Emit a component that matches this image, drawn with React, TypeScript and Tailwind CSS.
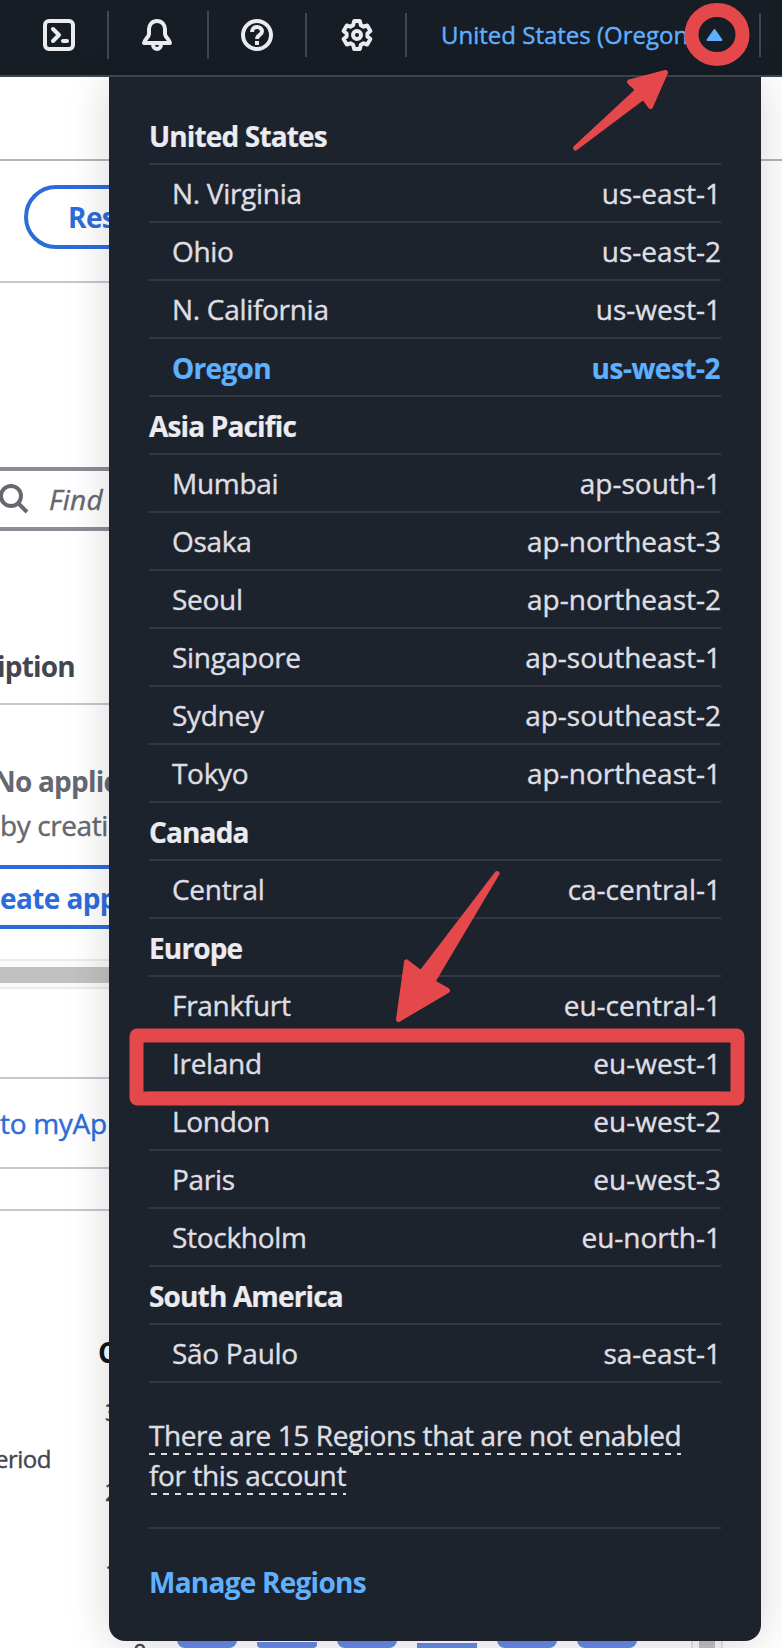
type Region = { name: string; code: string; active?: boolean };
type Group = { title: string; regions: Region[] };

const groups: Group[] = [
  {
    title: "United States",
    regions: [
      { name: "N. Virginia", code: "us-east-1" },
      { name: "Ohio", code: "us-east-2" },
      { name: "N. California", code: "us-west-1" },
      { name: "Oregon", code: "us-west-2", active: true },
    ],
  },
  {
    title: "Asia Pacific",
    regions: [
      { name: "Mumbai", code: "ap-south-1" },
      { name: "Osaka", code: "ap-northeast-3" },
      { name: "Seoul", code: "ap-northeast-2" },
      { name: "Singapore", code: "ap-southeast-1" },
      { name: "Sydney", code: "ap-southeast-2" },
      { name: "Tokyo", code: "ap-northeast-1" },
    ],
  },
  { title: "Canada", regions: [{ name: "Central", code: "ca-central-1" }] },
  {
    title: "Europe",
    regions: [
      { name: "Frankfurt", code: "eu-central-1" },
      { name: "Ireland", code: "eu-west-1" },
      { name: "London", code: "eu-west-2" },
      { name: "Paris", code: "eu-west-3" },
      { name: "Stockholm", code: "eu-north-1" },
    ],
  },
  { title: "South America", regions: [{ name: "São Paulo", code: "sa-east-1" }] },
];

function TopBar() {
  return (
    <header className="flex h-[77px] items-start border-b-2 border-[#424650] bg-[#161d25] text-[#ebebf0]">
      <div className="mt-[11px] flex h-12 w-[109px] items-center border-r-2 border-[#424650] pl-[43px]">
        <svg width="32" height="32" viewBox="0 0 32 32" fill="none" stroke="currentColor" strokeWidth="4" strokeLinejoin="round">
          <rect x="2" y="2" width="28" height="28" rx="4" />
          <path d="M10 10l6 6-6 6" strokeLinecap="round" />
          <path d="M20 22h4" strokeLinecap="round" />
        </svg>
      </div>
      <div className="mt-[11px] flex h-12 w-[100px] items-center border-r-2 border-[#424650] pl-8">
        <svg width="32" height="32" viewBox="0 0 32 32" fill="none" stroke="currentColor" strokeWidth="4" strokeLinejoin="round">
          <path d="M16 2c-5 0-8 4-8 8v5c0 3-5 6-5 9h26c0-3-5-6-5-9v-5c0-4-3-8-8-8z" />
          <path d="M12 25.500a4 4.500 0 0 0 8 0" />
        </svg>
      </div>
      <div className="mt-[13px] flex h-11 w-[98px] items-center border-r-2 border-[#424650] pl-8">
        <svg width="32" height="32" viewBox="0 0 32 32" fill="none" stroke="currentColor" strokeWidth="4">
          <circle cx="16" cy="16" r="14" />
          <path d="M11 13c0-3 2-5 5-5s5 1.800 5 4.500c0 3.500-5 3.500-5 7.500" />
          <path d="M14 24h4" />
        </svg>
      </div>
      <div className="mt-[13px] flex h-11 w-[100px] items-center border-r-2 border-[#424650] pl-[34px]">
        <svg width="32" height="32" viewBox="0 0 32 32" fill="none" stroke="currentColor" strokeWidth="4" strokeLinejoin="round">
          <path d="M13.200 2h5.600l1.100 4.300 2.600 1.400 3.700-1.200 3.200 5.400-3 2.600v3l3 2.600-3.200 5.400-3.700-1.200-2.600 1.400-1.100 4.300h-5.600l-1.100-4.300-2.600-1.400-3.700 1.200-3.200-5.400 3-2.600v-3l-3-2.600 3.200-5.400 3.700 1.200 2.600-1.400z" />
          <circle cx="16" cy="16" r="4" />
        </svg>
      </div>
      <div className="mt-[13px] flex h-11 w-[354px] items-center border-r-2 border-[#424650] pl-[34px] text-[#5fb1ff]">
        <span className="w-[258px] whitespace-nowrap text-[24px] leading-8">United States (Oregon)</span>
        <svg className="ml-[7px]" width="17" height="14" viewBox="0 0 17 14" fill="currentColor" stroke="currentColor" strokeWidth="2" strokeLinejoin="round">
          <path d="M8.500 2 15.500 12h-14z" />
        </svg>
      </div>
    </header>
  );
}

function Backdrop() {
  return (
    <div className="flex flex-col whitespace-nowrap text-[28px] leading-10">
      <div className="h-[84px] border-b-2 border-[#b4b4bb]" />
      <div className="flex w-[700px] flex-col">
        <div className="flex h-[122px] items-start border-b-2 border-[#c6c6cd] pl-6 pt-6">
          <div className="flex h-16 w-40 items-center rounded-full border-4 border-[#2c6cd9] pl-10 font-bold tracking-[-0.6px] text-[#2c6cd9] [-webkit-text-stroke:0px]">Res</div>
        </div>
        <div className="mt-[184px] flex h-16 items-center border-y-4 border-[#8c8c94] text-[#656871]">
          <svg className="-ml-1" width="34" height="32" viewBox="0 0 34 32" fill="none" stroke="currentColor" strokeWidth="4">
            <circle cx="15" cy="13" r="10" />
            <path d="M22 20l9 9" />
          </svg>
          <span className="ml-[19px] italic tracking-[0.3px]">Find</span>
        </div>
        <div className="mt-[115px] flex h-[59px] border-b-2 border-[#c6c6cd] font-bold tracking-[-0.8px] text-[#424650] [-webkit-text-stroke:0px]">
          <span className="-ml-[3px]">iption</span>
        </div>
        <div className="mt-[56px] -ml-[7px] h-[44px] font-bold tracking-[-0.8px] text-[#656871] [-webkit-text-stroke:0px]">No applic</div>
        <div className="h-[60px] tracking-[-0.4px] text-[#656871]">by creati</div>
        <div className="flex h-16 items-center border-y-4 border-[#2c6cd9] pt-px font-bold tracking-[-0.6px] text-[#2c6cd9] [-webkit-text-stroke:0px]">eate app</div>
        <div className="mt-[30px] flex h-[30px] flex-col border-y-2 border-[#ebebeb] bg-[#fafafa] pt-[6px]">
          <div className="h-4 bg-[#c1c1c1]" />
        </div>
        <div className="mt-[88px] h-[2px] bg-[#c6c6cd]" />
        <div className="flex h-[90px] items-center border-b-2 border-[#c6c6cd] tracking-[-0.3px] text-[#2c6cd9]">to myAp</div>
        <div className="h-[42px] border-b-2 border-[#c6c6cd]" />
        <div className="mt-[121px] pl-[98px] font-bold text-[#0f141a] [-webkit-text-stroke:0px]">C</div>
        <div className="mt-[20px] flex h-[200px] justify-between text-[24px] text-[#424650]">
          <div className="-ml-[5px] pt-[47px] tracking-[-0.5px]">eriod</div>
          <div className="flex w-[595px] flex-col gap-10">
            <span>3</span>
            <span>2</span>
            <span>1</span>
          </div>
        </div>
      </div>
    </div>
  );
}

function ChartEdge() {
  return (
    <div className="absolute inset-x-0 top-[1634px] flex h-[14px] overflow-hidden">
      <span className="ml-[133px] mt-[2px] w-[44px] text-[24px] leading-8 text-[#424650]">0</span>
      <div className="flex items-start gap-5">
        <div className="h-[14px] w-[60px] rounded-b-lg bg-[#688ae8]" />
        <div className="mt-2 h-[6px] w-[60px] rounded-b bg-[#688ae8]" />
        <div className="h-[14px] w-[60px] rounded-b-lg bg-[#688ae8]" />
        <div className="mt-[9px] h-[5px] w-[60px] bg-[#688ae8]" />
        <div className="h-[14px] w-[60px] rounded-b-lg bg-[#688ae8]" />
        <div className="h-[14px] w-[60px] rounded-b-lg bg-[#688ae8]" />
      </div>
      <div className="ml-[54px] w-8 border-x-2 border-[#e2e2e2] bg-[#fafafa] px-[6px]">
        <div className="h-full w-4 bg-[#c1c1c1]" />
      </div>
    </div>
  );
}

function RegionMenu() {
  return (
    <div className="absolute left-[109px] top-[77px] flex h-[1564px] w-[652px] flex-col rounded-b-2xl bg-[#1d232c] px-10 pt-[30px] text-[28px] leading-10 text-[#dedee3] shadow-[0_2px_44px_rgba(0,7,22,0.16)]">
      {groups.map((g) => (
        <section key={g.title}>
          <h2 className="flex h-[58px] items-center border-b-2 border-[#333843] pt-[2px] font-bold tracking-[-0.85px] text-[#ebebf0] [-webkit-text-stroke:0.2px]">
            <span>{g.title}</span>
          </h2>
          <ul>
            {g.regions.map((r) => (
              <li
                key={r.code}
                className={
                  r.active
                    ? "flex h-[58px] items-center justify-between border-b-2 border-[#333843] pl-[23px] pr-px pt-[2px] font-bold tracking-[-0.5px] text-[#5fb1ff] [-webkit-text-stroke:0.2px]"
                    : "flex h-[58px] items-center justify-between border-b-2 border-[#333843] pl-[23px]"
                }
              >
                <span className={r.active ? "tracking-[-0.7px]" : "tracking-[-0.3px]"}>{r.name}</span>
                <span>{r.code}</span>
              </li>
            ))}
          </ul>
        </section>
      ))}
      <div className="flex h-[146px] flex-col items-start border-b-2 border-[#333843] pt-8 tracking-[-0.4px]">
        <span className="h-10 whitespace-nowrap bg-[repeating-linear-gradient(90deg,#dedee3_0_6px,transparent_6px_12px)] bg-[length:100%_2px] bg-bottom bg-no-repeat">
          There are 15 Regions that are not enabled
        </span>
        <span className="h-10 whitespace-nowrap bg-[repeating-linear-gradient(90deg,transparent_0_2px,#dedee3_2px_8px,transparent_8px_12px)] bg-[length:100%_2px] bg-bottom bg-no-repeat">
          for this account
        </span>
      </div>
      <a className="mt-[33px] font-bold tracking-[-0.75px] text-[#5fb1ff] [-webkit-text-stroke:0px]">Manage Regions</a>
    </div>
  );
}

function Annotations() {
  return (
    <svg className="pointer-events-none absolute inset-0" width="782" height="1648" viewBox="0 0 782 1648">
      <ellipse cx="717" cy="34.500" rx="25.500" ry="24.500" fill="none" stroke="#e5484a" strokeWidth="14" />
      <g fill="#e5484a" stroke="#e5484a" strokeWidth="5" strokeLinejoin="round">
        <path d="M575.500 148 638 90 629.500 82 665.500 72.500 650.500 106.500 643.500 97z" />
        <path d="M497 873.500 421 973 406.500 962 398.500 1019.500 447.500 990.500 432.500 982z" />
      </g>
      <rect x="136.500" y="1035.500" width="601" height="63" rx="1" fill="none" stroke="#e5484a" strokeWidth="14" strokeLinejoin="round" />
    </svg>
  );
}

export default function App() {
  return (
    <div className="relative h-[1648px] w-[782px] overflow-hidden bg-white font-['Open_Sans','Noto_Sans',sans-serif] [-webkit-text-stroke:0.4px]">
      <TopBar />
      <Backdrop />
      <ChartEdge />
      <RegionMenu />
      <Annotations />
    </div>
  );
}
